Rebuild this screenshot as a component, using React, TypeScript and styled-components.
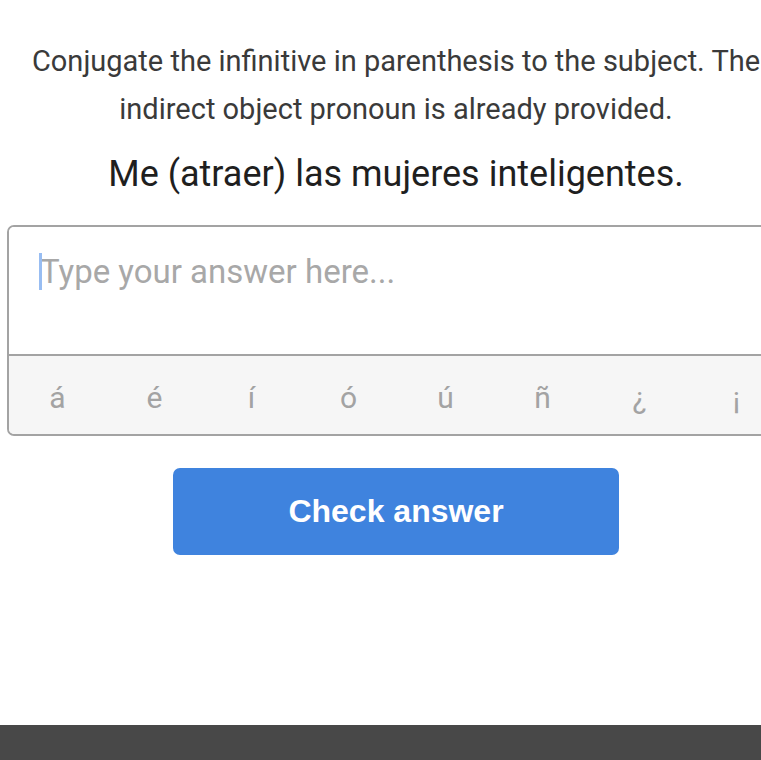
import React from 'react';
import styled, { createGlobalStyle } from 'styled-components';

const GlobalStyle = createGlobalStyle`
  html, body {
    margin: 0;
    padding: 0;
    background: #ffffff;
    overflow: hidden;
  }
  body {
    font-family: Roboto, "Noto Sans", sans-serif;
  }
`;

const accents = ['á', 'é', 'í', 'ó', 'ú', 'ñ', '¿', '¡'];

const App = () => {
  return (
    <>
      <GlobalStyle />
      <Page>
        <Exercise>
          <Instructions>
            Conjugate the infinitive in parenthesis to the subject. The indirect object pronoun is already provided.
          </Instructions>

          <Sentence>Me (atraer) las mujeres inteligentes.</Sentence>

          <AnswerBox>
            <InputWrap>
              <AnswerInput placeholder="Type your answer here..." />
              <Caret />
            </InputWrap>
            <Keys>
              {accents.map((a) => (
                <Key key={a}>{a}</Key>
              ))}
            </Keys>
          </AnswerBox>

          <CheckButton>Check answer</CheckButton>
        </Exercise>

        <Footer />
      </Page>
    </>
  );
};

export default App;

const Page = styled.div`
  width: 761px;
  height: 760px;
  display: flex;
  flex-direction: column;
  justify-content: space-between;
  overflow: hidden;
`;

const Exercise = styled.div`
  width: 778px;
  margin-left: 7px;
  padding-top: 37px;
  display: flex;
  flex-direction: column;
  align-items: center;
`;

const Instructions = styled.p`
  margin: 0;
  width: 750px;
  text-align: center;
  font-size: 29px;
  line-height: 48px;
  color: #3a3a3a;
`;

const Sentence = styled.div`
  margin-top: 21px;
  font-size: 36px;
  line-height: 40px;
  color: #1f1f1f;
`;

const AnswerBox = styled.div`
  margin-top: 31px;
  width: 100%;
  box-sizing: border-box;
  border: 2px solid #a3a3a3;
  border-radius: 7px;
  overflow: hidden;
`;

const InputWrap = styled.div`
  position: relative;
  border-bottom: 2px solid #a3a3a3;
`;

const AnswerInput = styled.textarea`
  display: block;
  width: 100%;
  height: 127px;
  box-sizing: border-box;
  border: none;
  outline: none;
  resize: none;
  padding: 25px 31px;
  font-family: Roboto, "Noto Sans", sans-serif;
  font-size: 33px;
  line-height: 40px;
  color: #222;

  &::placeholder {
    color: #a8a8a8;
  }
`;

const Caret = styled.span`
  position: absolute;
  left: 30px;
  top: 26px;
  width: 3px;
  height: 37px;
  background: #98bdf2;
`;

const Keys = styled.div`
  display: grid;
  grid-template-columns: repeat(8, 97px);
  height: 78px;
  background: #f6f6f6;
`;

const Key = styled.div`
  display: flex;
  align-items: center;
  justify-content: center;
  font-size: 30px;
  color: #a3a3a3;
  padding-top: 4px;
`;

const CheckButton = styled.button`
  margin-top: 32px;
  width: 446px;
  height: 87px;
  border: none;
  border-radius: 7px;
  background: #3f83de;
  color: #ffffff;
  font-family: "Liberation Sans", Arial, sans-serif;
  font-size: 32px;
  font-weight: 700;
`;

const Footer = styled.div`
  height: 35px;
  background: #484848;
`;
